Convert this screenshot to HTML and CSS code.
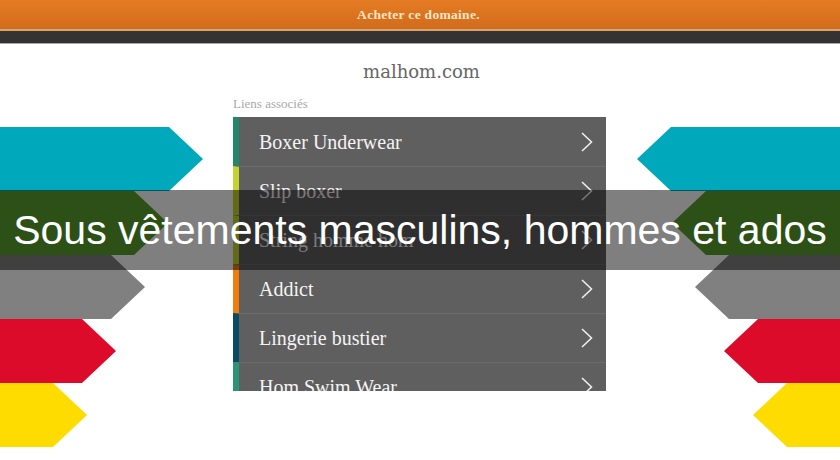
FILE: index.html
```html
<!DOCTYPE html>
<html>
<head>
    <meta charset="UTF-8">
    <title>malhom.com</title>
    <link rel="stylesheet" href="styles.css">
</head>
<body>

<header class="buybar">
    <a class="buylink" href="#">Acheter ce domaine.</a>
</header>
<div class="darkbar"></div>

<main class="stage">
    <!-- left arrows -->
    <div class="arrows arrows-left">
        <span class="arrow cyan w1"></span>
        <span class="arrow green w2"></span>
        <span class="arrow grey w3"></span>
        <span class="arrow red w4"></span>
        <span class="arrow yellow w5"></span>
    </div>

    <div class="content">
        <h1 class="domain">malhom.com</h1>
        <p class="related">Liens associés</p>
        <ul class="links">
            <li class="c-teal"><a href="#">Boxer Underwear</a><svg class="chev" width="12" height="20" viewBox="0 0 12 20"><polyline points="1,1 10.5,10 1,19" /></svg></li>
            <li class="c-lime"><a href="#">Slip boxer</a><svg class="chev" width="12" height="20" viewBox="0 0 12 20"><polyline points="1,1 10.5,10 1,19" /></svg></li>
            <li class="c-lime"><a href="#">String homme hom</a><svg class="chev" width="12" height="20" viewBox="0 0 12 20"><polyline points="1,1 10.5,10 1,19" /></svg></li>
            <li class="c-orange"><a href="#">Addict</a><svg class="chev" width="12" height="20" viewBox="0 0 12 20"><polyline points="1,1 10.5,10 1,19" /></svg></li>
            <li class="c-navy"><a href="#">Lingerie bustier</a><svg class="chev" width="12" height="20" viewBox="0 0 12 20"><polyline points="1,1 10.5,10 1,19" /></svg></li>
            <li class="c-teal2"><a href="#">Hom Swim Wear</a><svg class="chev" width="12" height="20" viewBox="0 0 12 20"><polyline points="1,1 10.5,10 1,19" /></svg></li>
        </ul>
    </div>

    <!-- right arrows -->
    <div class="arrows arrows-right">
        <span class="arrow cyan w1"></span>
        <span class="arrow green w2"></span>
        <span class="arrow grey w3"></span>
        <span class="arrow red w4"></span>
        <span class="arrow yellow w5"></span>
    </div>

    <div class="banner">Sous vêtements masculins, hommes et ados</div>
</main>

</body>
</html>
```

FILE: styles.css
```css
body {
    margin: 0;
    background-color: #ffffff;
    font-family: "Liberation Serif", serif;
    overflow: hidden;
}

.buybar {
    height: 29px;
    background: linear-gradient(#e67c24, #d06c1c);
    border-bottom: 2px solid #d8a46c;
    display: flex;
    justify-content: center;
    align-items: center;
}
.buylink {
    color: #fde6c8;
    font-size: 13.5px;
    font-weight: bold;
    letter-spacing: 0.3px;
    text-decoration: none;
    margin-left: -3px;
}
.darkbar {
    height: 12px;
    background-color: #333333;
    border-bottom: 1px solid #a8a8a8;
}

.stage {
    position: relative;
    display: grid;
    grid-template-columns: 233px 373px 1fr;
    height: 416px;
}

/* arrows */
.arrows {
    display: flex;
    flex-direction: column;
    padding-top: 83px;
}
.arrows-left {
    align-items: flex-start;
}
.arrows-right {
    align-items: flex-end;
}
.arrow {
    display: block;
    height: 64px;
}
.arrows-left .arrow {
    clip-path: polygon(0 0, calc(100% - 34px) 0, 100% 50%, calc(100% - 34px) 100%, 0 100%);
}
.arrows-right .arrow {
    clip-path: polygon(34px 0, 100% 0, 100% 100%, 34px 100%, 0 50%);
}
.cyan { background-color: #00a8bc; }
.green { background-color: #5ba02e; }
.grey { background-color: #808080; }
.red { background-color: #db0b29; }
.yellow { background-color: #ffdc00; }
.w1 { width: 203px; }
.w2 { width: 168px; }
.w3 { width: 145px; }
.w4 { width: 116px; }
.w5 { width: 87px; }

/* centre column */
.content {
    padding-top: 16px;
}
.domain {
    margin: 0;
    font-family: "DejaVu Serif", serif;
    font-weight: normal;
    font-size: 18px;
    line-height: 24px;
    color: #666666;
    text-align: center;
    margin-left: 4px;
}
.related {
    margin: 12px 0 0 0;
    font-size: 13px;
    line-height: 16px;
    color: #a8a8a8;
}
.links {
    list-style-type: none;
    margin: 5px 0 0 0;
    padding: 0;
    height: 274px;
    overflow: hidden;
}
.links li {
    display: flex;
    justify-content: space-between;
    align-items: center;
    height: 48px;
    padding: 0 13px 0 20px;
    background-color: #5f5f5f;
    border-left: 6px solid #23876b;
    border-top: 1px solid #6b6b6b;
}
.links li:first-child {
    height: 49px;
    border-top: none;
}
.links a {
    color: #f4f4f4;
    font-size: 20px;
    text-decoration: none;
    padding-top: 1px;
}
.chev polyline {
    fill: none;
    stroke: #eeeeee;
    stroke-width: 1.6;
}
.c-teal { border-left-color: #23876b !important; }
.c-lime { border-left-color: #c4d42c !important; }
.c-orange { border-left-color: #f27d0c !important; }
.c-navy { border-left-color: #0b4a63 !important; }
.c-teal2 { border-left-color: #2a9478 !important; }

/* title band over the page */
.banner {
    position: absolute;
    left: 0;
    right: 0;
    top: 146px;
    height: 80px;
    line-height: 80px;
    background-color: rgba(0, 0, 0, 0.5);
    color: #ffffff;
    font-family: "Liberation Sans", Arial, sans-serif;
    font-size: 41px;
    text-align: center;
    white-space: nowrap;
}
```
